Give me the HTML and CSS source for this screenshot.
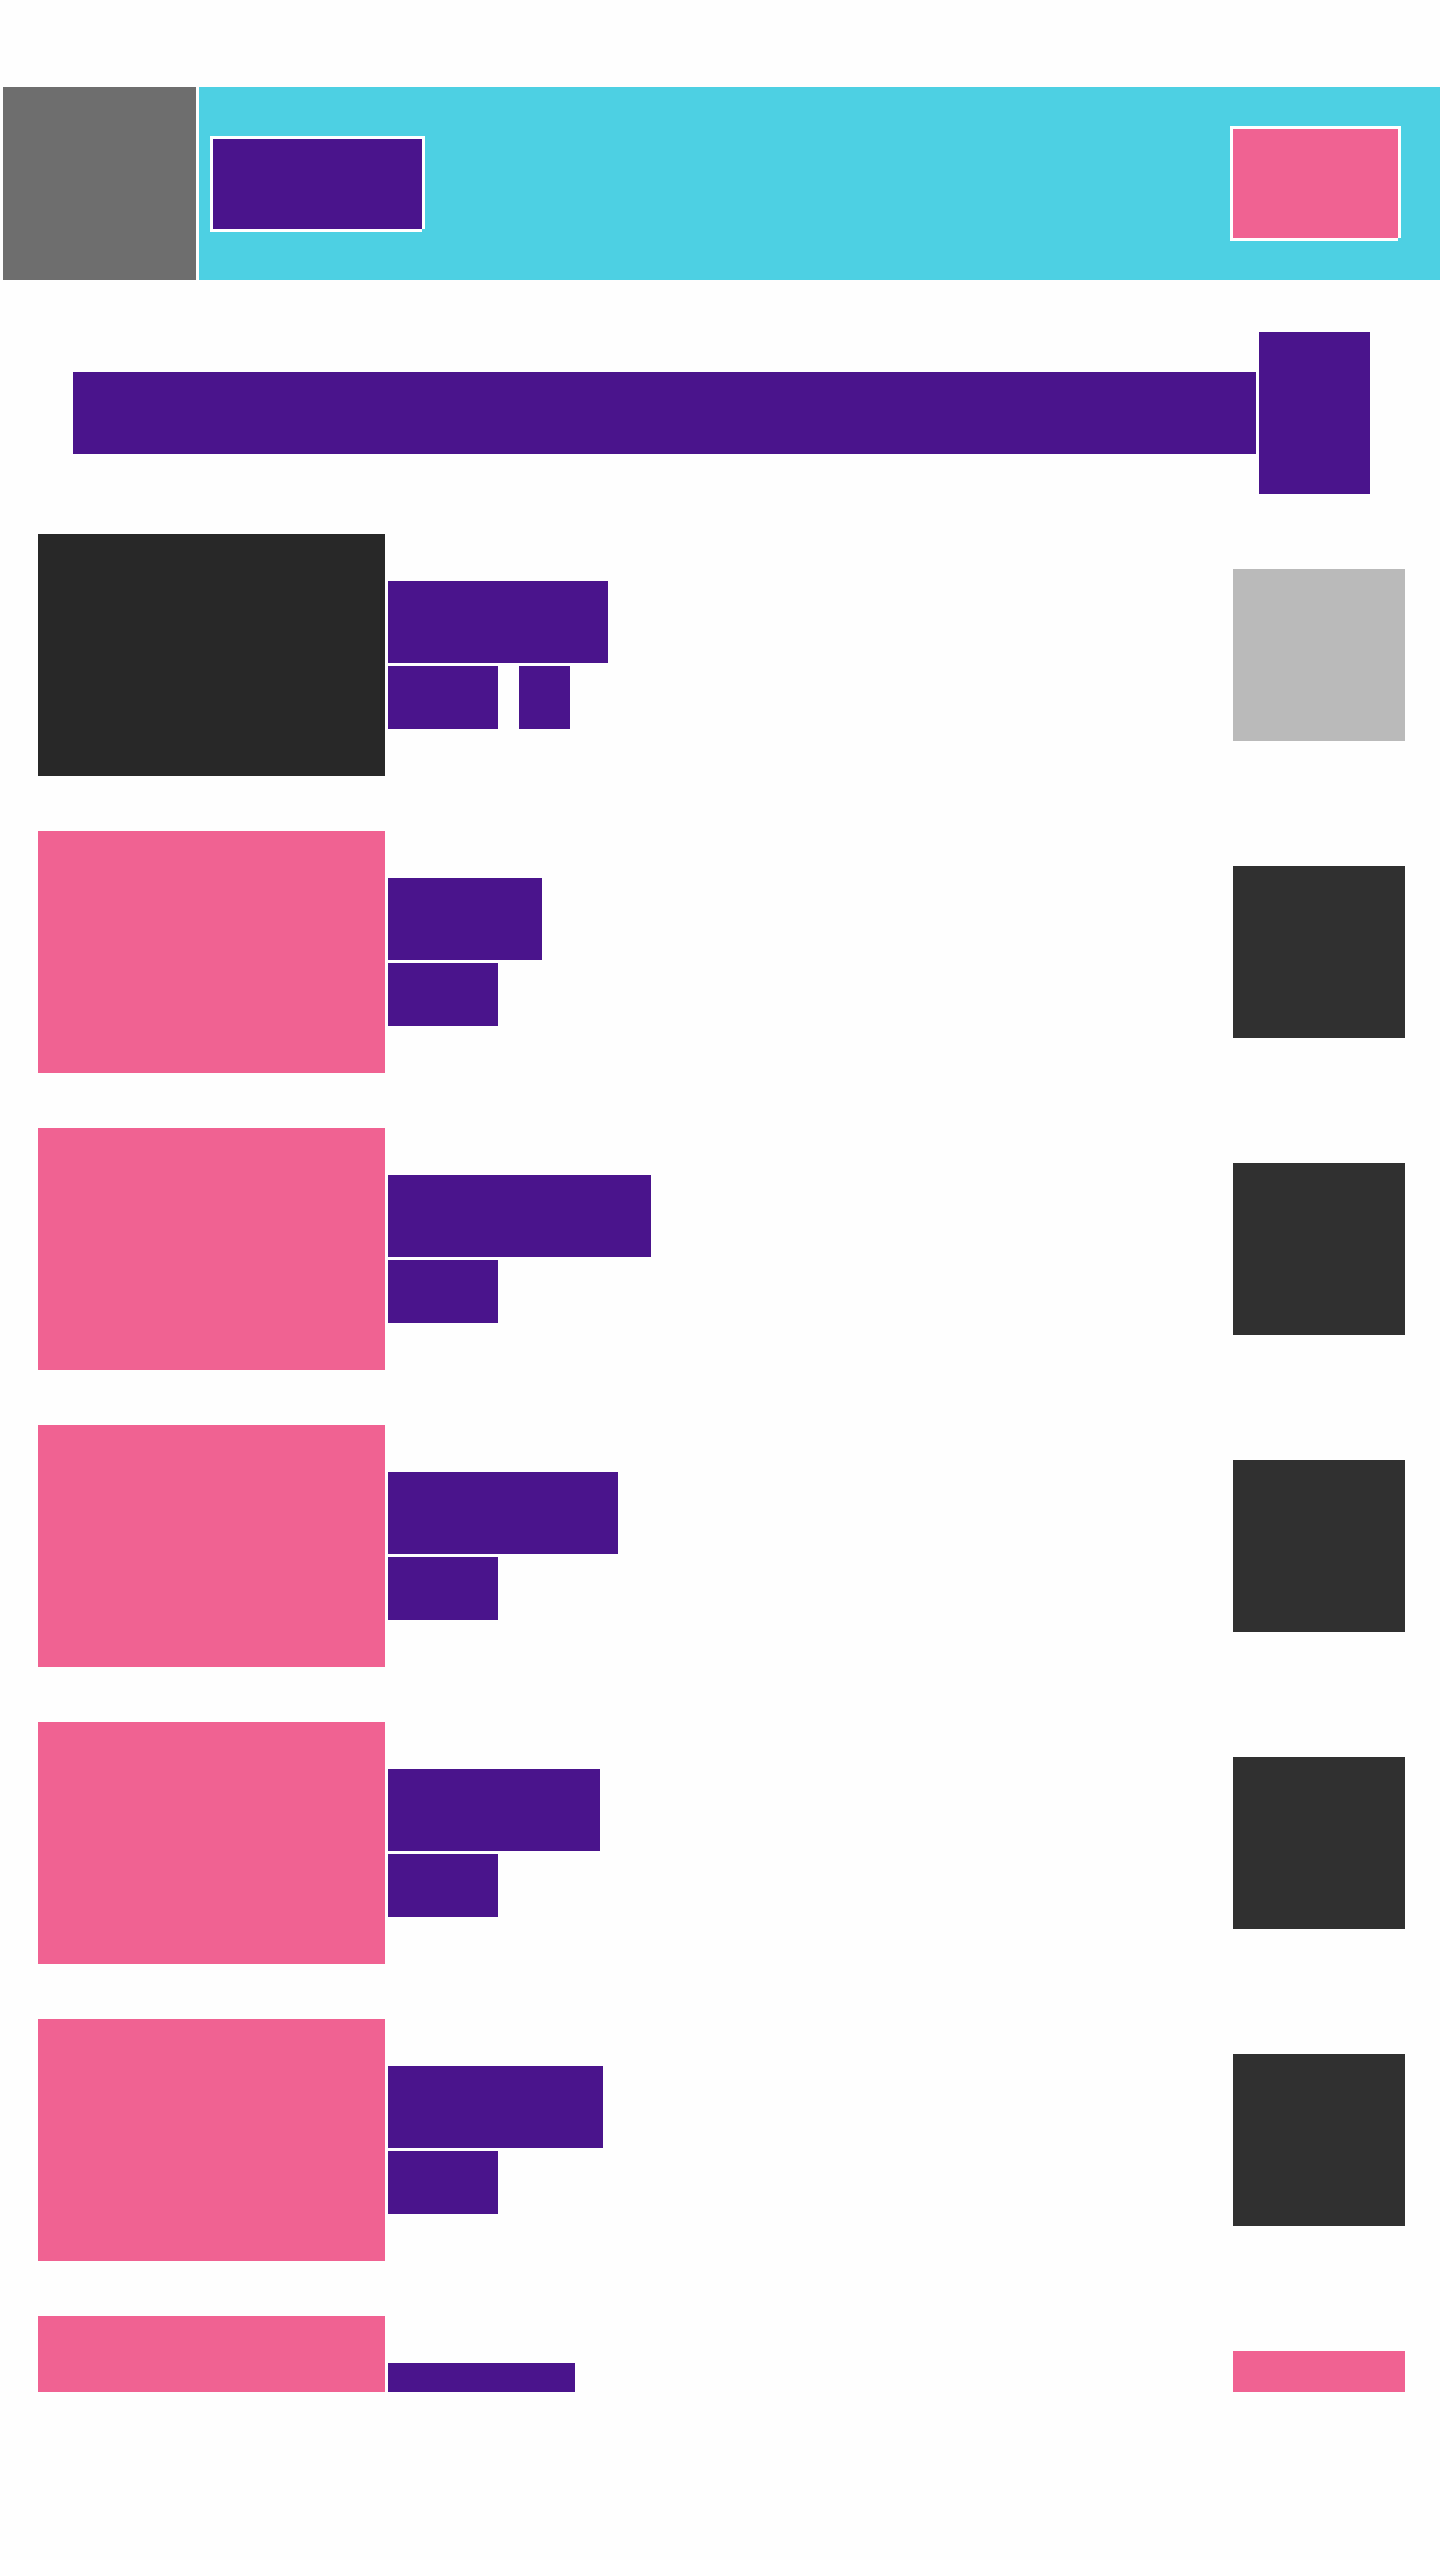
FILE: index.html
```html
<!DOCTYPE html>
<html lang="en">
<head>
<meta charset="utf-8">
<meta name="viewport" content="width=device-width, initial-scale=1">
<title>List</title>
<link rel="stylesheet" href="styles.css">
</head>
<body class="app">
<header class="toolbar">
  <button class="toolbar-nav" type="button" aria-label="Back"></button>
  <div class="toolbar-body">
    <div class="toolbar-title outlined"></div>
    <button class="toolbar-action outlined" type="button" aria-label="Action"></button>
  </div>
</header>
<section class="summary">
  <div class="summary-label"></div>
  <div class="summary-value"></div>
</section>
<ul class="list">
  <li class="row">
    <div class="thumb thumb-dark"></div>
    <div class="text"><div class="name" style="width:220px"></div><div class="meta"><span class="size"></span><span class="tag"></span></div></div>
    <button class="more more-light" type="button" aria-label="Options"></button>
  </li>
  <li class="row">
    <div class="thumb"></div>
    <div class="text"><div class="name" style="width:154px"></div><div class="meta"><span class="size"></span></div></div>
    <button class="more" type="button" aria-label="Options"></button>
  </li>
  <li class="row">
    <div class="thumb"></div>
    <div class="text"><div class="name" style="width:263px"></div><div class="meta"><span class="size"></span></div></div>
    <button class="more" type="button" aria-label="Options"></button>
  </li>
  <li class="row">
    <div class="thumb"></div>
    <div class="text"><div class="name" style="width:230px"></div><div class="meta"><span class="size"></span></div></div>
    <button class="more" type="button" aria-label="Options"></button>
  </li>
  <li class="row">
    <div class="thumb"></div>
    <div class="text"><div class="name" style="width:212px"></div><div class="meta"><span class="size"></span></div></div>
    <button class="more" type="button" aria-label="Options"></button>
  </li>
  <li class="row">
    <div class="thumb"></div>
    <div class="text"><div class="name" style="width:215px"></div><div class="meta"><span class="size"></span></div></div>
    <button class="more" type="button" aria-label="Options"></button>
  </li>
  <li class="row">
    <div class="thumb"></div>
    <div class="text"><div class="name" style="width:187px"></div><div class="meta"><span class="size"></span></div></div>
    <button class="more more-pink" type="button" aria-label="Options"></button>
  </li>
</ul>
</body>
</html>
```
FILE: styles.css
```css
:root {
  --purple: #4a148c;
  --pink: #f06292;
  --cyan: #4dd0e3;
  --gap: 3px;
}

* {
  box-sizing: border-box;
}

button {
  border: 0;
  padding: 0;
  border-radius: 0;
}

.app {
  display: flex;
  flex-direction: column;
  height: 100vh;
  margin: 0;
  padding: 87px 0 168px;
  background: #fefefe;
  font-family: Roboto, sans-serif;
}

.toolbar {
  display: flex;
  flex: none;
  gap: var(--gap);
  height: 193px;
  padding-left: var(--gap);
}

.toolbar-nav {
  flex: none;
  width: 193px;
  background: #6e6e6e;
}

.toolbar-body {
  display: flex;
  flex: 1;
  align-items: center;
  justify-content: space-between;
  padding: 0 42px 0 14px;
  background: var(--cyan);
}

/* White frame, open at the bottom right corner */
.outlined {
  box-shadow: -3px -3px #fff, 3px -3px #fff, -3px 3px #fff, 3px 0 #fff, 0 3px #fff;
}

.toolbar-title {
  width: 209px;
  height: 90px;
  background: var(--purple);
}

.toolbar-action {
  width: 165px;
  height: 109px;
  background: var(--pink);
}

.summary {
  display: flex;
  flex: none;
  align-items: center;
  gap: var(--gap);
  padding: 52px 70px 40px 73px;
}

.summary-label {
  flex: 1;
  height: 82px;
  background: var(--purple);
}

.summary-value {
  width: 111px;
  height: 162px;
  background: var(--purple);
}

.list {
  display: flex;
  flex: 1;
  flex-direction: column;
  gap: 55px;
  min-height: 0;
  margin: 0;
  padding: 0 35px 0 38px;
  overflow: hidden;
  list-style: none;
}

.row {
  display: flex;
  flex: none;
  align-items: center;
  gap: var(--gap);
}

.thumb {
  flex: none;
  width: 347px;
  height: 242px;
  background: var(--pink);
}

.thumb-dark {
  background: #282828;
}

.text {
  display: flex;
  flex: 1;
  flex-direction: column;
  gap: var(--gap);
}

.name {
  height: 82px;
  background: var(--purple);
}

.meta {
  display: flex;
  gap: 21px;
}

.size,
.tag {
  width: 110px;
  height: 63px;
  background: var(--purple);
}

.tag {
  width: 51px;
}

.more {
  flex: none;
  width: 172px;
  height: 172px;
  background: #303030;
}

.more-light {
  background: #bababa;
}

.more-pink {
  background: var(--pink);
}
```
